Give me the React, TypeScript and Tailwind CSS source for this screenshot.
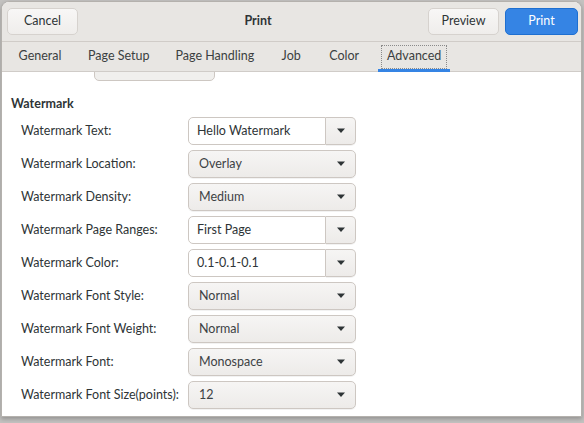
import React from "react";

const font = { fontFamily: "Lato, 'Open Sans', sans-serif" };

type Row = { label: string; value: string; entry?: boolean };

const rows: Row[] = [
  { label: "Watermark Text:", value: "Hello Watermark", entry: true },
  { label: "Watermark Location:", value: "Overlay" },
  { label: "Watermark Density:", value: "Medium" },
  { label: "Watermark Page Ranges:", value: "First Page", entry: true },
  { label: "Watermark Color:", value: "0.1-0.1-0.1", entry: true },
  { label: "Watermark Font Style:", value: "Normal" },
  { label: "Watermark Font Weight:", value: "Normal" },
  { label: "Watermark Font:", value: "Monospace" },
  { label: "Watermark Font Size(points):", value: "12" },
];

// label widths keep the tab strip spaced like the GTK notebook
const tabs = [
  { name: "General", w: "min-w-[44px]" },
  { name: "Page Setup", w: "min-w-[61px]" },
  { name: "Page Handling", w: "min-w-[78px]" },
  { name: "Job", w: "min-w-[22px]" },
  { name: "Color", w: "min-w-[32px]" },
  { name: "Advanced", w: "min-w-[56px]" },
];

function Arrow() {
  return (
    <svg width="10" height="6" viewBox="0 0 10 6" className="shrink-0">
      <path d="M1 0.5 L9 0.5 L5 5 Z" fill="#2e3436" />
    </svg>
  );
}

function Combo({ value, entry }: { value: string; entry?: boolean }) {
  if (entry) {
    return (
      <div className="flex h-[28px] w-[168px]">
        <div className="flex-1 flex items-center pl-[8px] bg-white border border-[#cdc7c2] rounded-l-[5px] text-[#2e3436]">
          {value}
        </div>
        <div className="w-[30px] flex items-center justify-center border border-l-0 border-[#cdc7c2] rounded-r-[5px] bg-gradient-to-b from-[#f6f5f4] to-[#edebe9] shadow-[0_1px_0_rgba(0,0,0,0.05)]">
          <Arrow />
        </div>
      </div>
    );
  }
  return (
    <div className="flex h-[28px] w-[168px] items-center justify-between pl-[10px] pr-[9px] border border-[#cdc7c2] rounded-[5px] bg-gradient-to-b from-[#f6f5f4] to-[#edebe9] shadow-[0_1px_0_rgba(0,0,0,0.05)] text-[#3d4244]">
      <span>{value}</span>
      <Arrow />
    </div>
  );
}

export default function App() {
  return (
    <div className="w-[584px] h-[423px] bg-[#c3c2c0] pl-[1px] pt-[1px] text-[12.5px]" style={font}>
      <div className="w-[581px] h-[416px] bg-white rounded-t-[8px] overflow-hidden flex flex-col border border-[#b4b1ad] shadow-[0_2px_4px_rgba(0,0,0,0.25)]">
        {/* header bar */}
        <div className="h-[40px] shrink-0 bg-[#e8e6e3] border-b border-[#d0ccc8] flex items-center pl-[5px] pr-[3px]">
          <button className="h-[27px] w-[71px] rounded-[5px] border border-[#d6d2ce] bg-gradient-to-b from-[#f8f7f6] to-[#efedeb] text-[#2e3436]">
            Cancel
          </button>
          <div className="flex-1 text-center font-bold text-[#2e3436] pl-[10px]">Print</div>
          <button className="h-[27px] w-[71px] rounded-[5px] border border-[#d6d2ce] bg-gradient-to-b from-[#f8f7f6] to-[#efedeb] text-[#2e3436]">
            Preview
          </button>
          <button className="ml-[6px] h-[27px] w-[73px] rounded-[5px] border border-[#1e6fd0] bg-[#3584e4] text-white">
            Print
          </button>
        </div>

        {/* notebook tabs */}
        <div className="h-[30px] shrink-0 bg-[#e8e6e3] border-b border-[#d0ccc8] flex gap-[10px] pl-[8px]">
          {tabs.map((t) => {
            const active = t.name === "Advanced";
            return (
              <div key={t.name} className="relative shrink-0 flex items-center px-[8px] text-[#3b3f41]">
                {active && (
                  <>
                    <div className="absolute left-[3px] right-[3px] top-[3px] bottom-[2px] border border-dotted border-[#8a8a8a]" />
                    <div className="absolute left-0 right-0 bottom-[-1px] h-[3px] bg-[#3584e4]" />
                  </>
                )}
                <span className={`relative inline-block whitespace-nowrap text-center ${t.w}`}>{t.name}</span>
              </div>
            );
          })}
        </div>

        {/* scrolled page */}
        <div className="flex-1 overflow-hidden text-[#2e3436]">
          <div className="h-[9px] overflow-hidden pl-[92px]">
            <div className="mt-[-19px] h-[28px] w-[121px] rounded-[5px] border border-[#cdc7c2] bg-[#f0efed]" />
          </div>
          <div className="pl-[9px] pt-[15px] font-bold leading-[16px]">Watermark</div>
          <div className="pl-[19px] pt-[5px] flex flex-col gap-[5px]">
            {rows.map((r) => (
              <div key={r.label} className="flex items-center">
                <div className="w-[167px]">{r.label}</div>
                <Combo value={r.value} entry={r.entry} />
              </div>
            ))}
          </div>
        </div>
      </div>
    </div>
  );
}
